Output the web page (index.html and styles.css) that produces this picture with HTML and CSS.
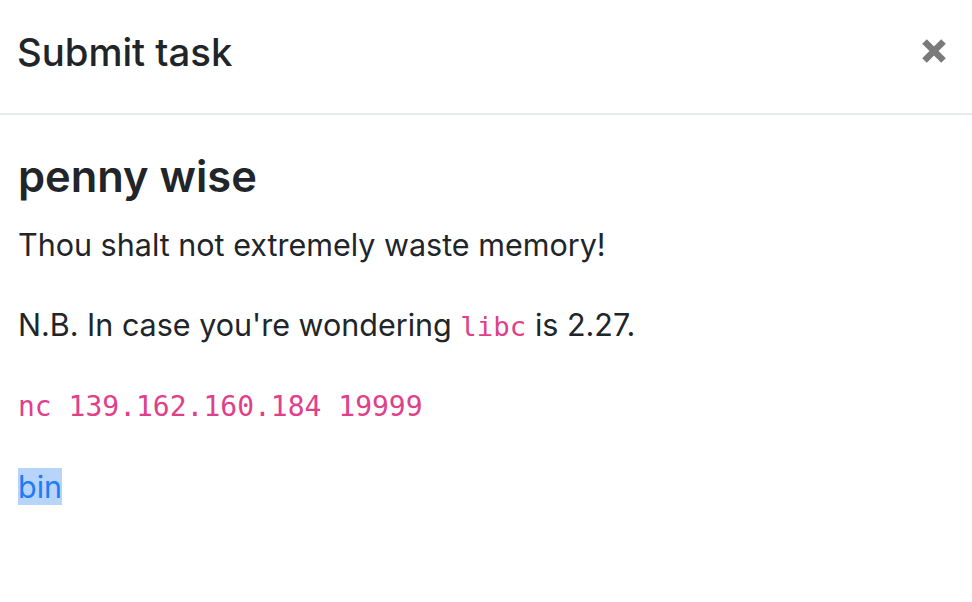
FILE: index.html
```html
<!DOCTYPE html>
<html lang="en">
<head>
<meta charset="utf-8">
<title>Submit task</title>
<link rel="stylesheet" href="styles.css">
</head>
<body>
<div class="modal">
  <header class="modal-header">
    <h5 class="modal-title">Submit task</h5>
    <button class="close" type="button" aria-label="Close">
      <svg width="24" height="26" viewBox="0 0 24 26" aria-hidden="true">
        <path d="M2.5 3.5 L21.5 22.5 M21.5 3.5 L2.5 22.5" stroke="currentColor" stroke-width="6.5" fill="none"/>
      </svg>
    </button>
  </header>
  <div class="modal-body">
    <h4 class="task-title">penny wise</h4>
    <p>Thou shalt not extremely waste memory!</p>
    <p>N.B. In case you're wondering <code>libc</code> is 2.27.</p>
    <pre><code>nc 139.162.160.184 19999</code></pre>
    <p><a class="file-link" href="#">bin</a></p>
  </div>
</div>
</body>
</html>
```

FILE: styles.css
```css
html, body {
  margin: 0;
  padding: 0;
  background: #fff;
}

body {
  font-family: "Inter", "Liberation Sans", sans-serif;
  color: #212529;
  width: 972px;
  height: 602px;
  overflow: hidden;
}

.modal {
  display: flex;
  flex-direction: column;
}

.modal-header {
  display: flex;
  align-items: flex-start;
  justify-content: space-between;
  padding: 24px 26px 32px 17px;
  border-bottom: 2px solid #e9ecef;
}

.modal-title {
  margin: 0;
  font-size: 38.3px;
  line-height: 57px;
  font-weight: 500;
}

.close {
  display: flex;
  align-items: center;
  justify-content: center;
  margin: 14px 0 0 0;
  padding: 0;
  border: 0;
  background: transparent;
  color: #7a7a7a;
  cursor: pointer;
}

.modal-body {
  padding: 35px 18px 0 18px;
}

.task-title {
  margin: 0 0 19px 0;
  font-size: 43.4px;
  line-height: 53px;
  font-weight: 600;
}

p {
  margin: 0 0 35px 0;
  font-size: 30.5px;
  line-height: 45px;
}

code {
  font-family: "DejaVu Sans Mono", "Liberation Mono", monospace;
  font-size: 27.4px;
  color: #e0408a;
}

pre {
  margin: 0 0 35px 0;
  font-size: 28px;
  line-height: 45px;
}

pre code {
  font-size: 28px;
}

.file-link {
  color: #1f7cf6;
  text-decoration: none;
  background: #b7d4fb;
}
```
